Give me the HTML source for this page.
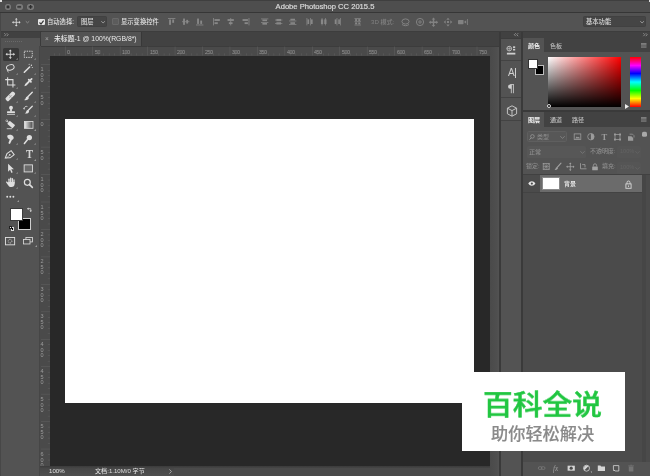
<!DOCTYPE html><html lang="zh"><head><meta charset="utf-8"><title>Adobe Photoshop CC 2015.5</title><style>
*{margin:0;padding:0;box-sizing:border-box}
html,body{width:650px;height:476px;overflow:hidden;background:#535353}
body{position:relative;font-family:"Liberation Sans","Noto Sans CJK SC",sans-serif;color:#ddd;font-size:7px;line-height:1;font-weight:500}
.a{position:absolute}
.t{position:absolute;white-space:nowrap;line-height:1;will-change:transform}
svg{position:absolute;overflow:visible;will-change:transform}
</style></head><body><div class="a" style="left:0px;top:0px;width:650px;height:12px;background:#4e4e4e;"></div><div class="a" style="left:0px;top:0px;width:650px;height:0.8px;background:#3f3f3f;"></div><div class="a" style="left:0px;top:0px;width:1.5px;height:1.5px;background:#ddd;"></div><div class="a" style="left:648.5px;top:0px;width:1.5px;height:1.5px;background:#ddd;"></div><div class="a" style="left:0px;top:12px;width:650px;height:1px;background:#363636;"></div><div class="a" style="left:4.6px;top:3.500px;width:6.800px;height:6.800px;border-radius:50%;background:radial-gradient(circle,#666 0,#7a7a7a 55%,#8e8e8e 100%)"></div><div class="a" style="left:15.8px;top:3.500px;width:6.800px;height:6.800px;border-radius:50%;background:radial-gradient(circle,#666 0,#7a7a7a 55%,#8e8e8e 100%)"></div><div class="a" style="left:27.2px;top:3.500px;width:6.800px;height:6.800px;border-radius:50%;background:radial-gradient(circle,#666 0,#7a7a7a 55%,#8e8e8e 100%)"></div><svg style="left:0;top:0" width="40" height="12"><g stroke="#2e2e2e" stroke-width="1.300" fill="none"><path d="M6.800 5.700l2.400 2.400M9.200 5.700l-2.400 2.400"/><path d="M17.300 6.900h3.800"/><path d="M28.700 6.900h3.800M30.600 5v3.800"/></g></svg><div class="t" style="left:0px;top:2.7px;font-size:7.6px;color:#dadada;width:650px;text-align:center;-webkit-text-stroke:0.200px #dadada;">Adobe Photoshop CC 2015.5</div><div class="a" style="left:0px;top:13px;width:650px;height:17.7px;background:#535353;"></div><div class="a" style="left:0px;top:30.7px;width:650px;height:1.3px;background:#3d3d3d;"></div><svg style="left:11.7px;top:18.4px" width="8.6" height="8.6" viewBox="0 0 10 10"><g stroke="#d8d8d8" stroke-width="1" fill="none"><path d="M5 1v8M1 5h8"/></g><g fill="#d8d8d8"><path d="M5 0l1.6 1.8h-3.2zM5 10l1.6-1.8h-3.2zM0 5l1.8-1.6v3.2zM10 5l-1.8-1.6v3.2z"/></g></svg><svg style="left:25px;top:21.300px" width="5" height="2.400" viewBox="0 0 5 3"><path d="M0.300 0.300l2.200 2 2.200-2" stroke="#9a9a9a" fill="none" stroke-width="1"/></svg><div class="a" style="left:38px;top:18.5px;width:6.5px;height:6.5px;background:#e6e6e6;border-radius:1px"></div><svg style="left:38px;top:18.5px" width="7" height="7" viewBox="0 0 7 7"><path d="M1.5 3.5l1.5 1.6 2.6-3.4" stroke="#333" fill="none" stroke-width="1.1"/></svg><div class="t" style="left:47.2px;top:19px;font-size:6.3px;color:#e0e0e0;">自动选择:</div><div class="a" style="left:76.5px;top:16.3px;width:30.7px;height:10.6px;background:#454545;border-radius:1.500px;border:0.500px solid #414141"></div><div class="t" style="left:81px;top:19px;font-size:6.3px;color:#dcdcdc;">图层</div><svg style="left:100.500px;top:20.800px" width="4.200" height="2.500" viewBox="0 0 5 3"><path d="M0.300 0.300l2.200 2 2.200-2" stroke="#aaa" fill="none" stroke-width="1"/></svg><div class="a" style="left:112.200px;top:18.200px;width:6.800px;height:6.800px;background:#5c5c5c;border:0.600px solid #686868;border-radius:1px"></div><div class="t" style="left:121.4px;top:19px;font-size:6.3px;color:#e0e0e0;">显示变换控件</div><svg style="left:168.3px;top:17.6px" width="7.400" height="7.400" viewBox="0 0 8 8"><g fill="#888"><rect x="0" y="0" width="8" height="0.9"/><rect x="1.2" y="1.6" width="2" height="5.8"/><rect x="4.6" y="1.6" width="2" height="3.6"/></g></svg><svg style="left:182.1px;top:17.6px" width="7.400" height="7.400" viewBox="0 0 8 8"><g fill="#888"><rect x="0" y="3.6" width="8" height="0.9"/><rect x="1.2" y="0.6" width="2" height="6.8"/><rect x="4.6" y="2" width="2" height="4"/></g></svg><svg style="left:195.9px;top:17.6px" width="7.400" height="7.400" viewBox="0 0 8 8"><g fill="#888"><rect x="0" y="7.1" width="8" height="0.9"/><rect x="1.2" y="0.6" width="2" height="5.8"/><rect x="4.6" y="2.8" width="2" height="3.6"/></g></svg><svg style="left:212.5px;top:17.6px" width="7.400" height="7.400" viewBox="0 0 8 8"><g fill="#888"><rect x="0" y="0" width="0.9" height="8"/><rect x="1.6" y="1.2" width="5.8" height="2"/><rect x="1.6" y="4.6" width="3.6" height="2"/></g></svg><svg style="left:227.3px;top:17.6px" width="7.400" height="7.400" viewBox="0 0 8 8"><g fill="#888"><rect x="3.6" y="0" width="0.9" height="8"/><rect x="0.6" y="1.2" width="6.8" height="2"/><rect x="2" y="4.6" width="4" height="2"/></g></svg><svg style="left:241.5px;top:17.6px" width="7.400" height="7.400" viewBox="0 0 8 8"><g fill="#888"><rect x="7.1" y="0" width="0.9" height="8"/><rect x="0.6" y="1.2" width="5.8" height="2"/><rect x="2.8" y="4.6" width="3.6" height="2"/></g></svg><svg style="left:260.6px;top:17.6px" width="7.400" height="7.400" viewBox="0 0 8 8"><g fill="#888"><rect x="0" y="0.6" width="8" height="0.8"/><rect x="0" y="4.4" width="8" height="0.8"/><rect x="1.5" y="1.6" width="5" height="1.8"/><rect x="1.5" y="5.4" width="5" height="1.8"/></g></svg><svg style="left:274.8px;top:17.6px" width="7.400" height="7.400" viewBox="0 0 8 8"><g fill="#888"><rect x="0" y="1.8" width="8" height="0.8"/><rect x="0" y="5.4" width="8" height="0.8"/><rect x="1.5" y="1" width="5" height="2.4"/><rect x="1.5" y="4.6" width="5" height="2.4"/></g></svg><svg style="left:288.6px;top:17.6px" width="7.400" height="7.400" viewBox="0 0 8 8"><g fill="#888"><rect x="0" y="2.8" width="8" height="0.8"/><rect x="0" y="6.6" width="8" height="0.8"/><rect x="1.5" y="0.8" width="5" height="1.8"/><rect x="1.5" y="4.6" width="5" height="1.8"/></g></svg><svg style="left:305.8px;top:17.6px" width="7.400" height="7.400" viewBox="0 0 8 8"><g fill="#888"><rect x="0.6" y="0" width="0.8" height="8"/><rect x="4.4" y="0" width="0.8" height="8"/><rect x="1.6" y="1.5" width="1.8" height="5"/><rect x="5.4" y="1.5" width="1.8" height="5"/></g></svg><svg style="left:319.5px;top:17.6px" width="7.400" height="7.400" viewBox="0 0 8 8"><g fill="#888"><rect x="1.8" y="0" width="0.8" height="8"/><rect x="5.4" y="0" width="0.8" height="8"/><rect x="1" y="1.5" width="2.4" height="5"/><rect x="4.6" y="1.5" width="2.4" height="5"/></g></svg><svg style="left:334.1px;top:17.6px" width="7.400" height="7.400" viewBox="0 0 8 8"><g fill="#888"><rect x="2.8" y="0" width="0.8" height="8"/><rect x="6.6" y="0" width="0.8" height="8"/><rect x="0.8" y="1.5" width="1.8" height="5"/><rect x="4.6" y="1.5" width="1.8" height="5"/></g></svg><svg style="left:353.6px;top:17.6px" width="7.400" height="7.400" viewBox="0 0 8 8"><g fill="#888"><rect x="0.5" y="0" width="7" height="0.8"/><rect x="0.5" y="3.6" width="7" height="0.8"/><rect x="0.5" y="7.2" width="7" height="0.8"/><rect x="1.2" y="1.2" width="2.2" height="2"/><rect x="4.6" y="1.2" width="2.2" height="2"/><rect x="1.2" y="4.8" width="2.2" height="2"/><rect x="4.6" y="4.8" width="2.2" height="2"/></g></svg><div class="t" style="left:370.5px;top:19.2px;font-size:6.1px;color:#808080;">3D 模式:</div><svg style="left:400px;top:17px" width="70" height="10" viewBox="0 0 70 10"><g fill="none" stroke="#828282" stroke-width="1"><ellipse cx="5.5" cy="4.5" rx="3.6" ry="2.6"/><path d="M2 7.5c2 1.6 5 1.6 7 0"/><circle cx="20" cy="5" r="3.6"/><circle cx="20" cy="5" r="1.2"/></g><g fill="#828282"><path d="M33.5 0.5l1.8 2h-1.1v2h2v-1.1l2 1.8-2 1.8v-1.1h-2v2h1.1l-1.8 2-1.8-2h1.1v-2h-2v1.1l-2-1.8 2-1.8v1.1h2v-2h-1.1z"/><path d="M48 0.8l1.7 2h-3.4zM48 9.4l1.7-2h-3.4zM43.7 5l2-1.7v3.4zM52.3 5l-2-1.7v3.4z"/><rect x="47" y="4" width="2" height="2"/><rect x="58" y="3" width="5.5" height="4.2" rx="0.6"/><path d="M64 5l2.2-1.8v3.6z"/><rect x="67" y="2" width="0.8" height="6"/></g></svg><div class="a" style="left:582.6px;top:16.3px;width:63.6px;height:10.9px;background:#454545;border-radius:1.500px;border:0.500px solid #414141"></div><div class="t" style="left:585.5px;top:19px;font-size:6.3px;color:#dcdcdc;">基本功能</div><svg style="left:640.300px;top:20.800px" width="4.200" height="2.500" viewBox="0 0 5 3"><path d="M0.300 0.300l2.200 2 2.200-2" stroke="#aaa" fill="none" stroke-width="1"/></svg><div class="a" style="left:0px;top:32px;width:39px;height:444px;background:#535353;"></div><div class="a" style="left:0px;top:32px;width:39.5px;height:5.8px;background:#414141;"></div><svg style="left:3.5px;top:33px" width="5" height="3.4" viewBox="0 0 5 3.4"><path d="M0.3 0.2l1.5 1.5-1.5 1.5M2.7 0.2l1.500 1.500-1.500 1.500" fill="none" stroke="#a8a8a8" stroke-width="0.700"/></svg><div class="a" style="left:39.5px;top:31px;width:2px;height:15.3px;background:#3a3a3a;"></div><div class="a" style="left:38.8px;top:46px;width:0.9px;height:430px;background:#464646;"></div><div class="a" style="left:5px;top:40.500px;width:18px;height:1px;background:repeating-linear-gradient(90deg,#6a6a6a 0 1px,transparent 1px 2px)"></div><div class="a" style="left:0px;top:13px;width:0.8px;height:463px;background:#474747;"></div><div class="a" style="left:3px;top:48px;width:16px;height:12.5px;background:#383838;border-radius:1.5px"></div><svg style="left:5.1000000000000005px;top:48.7px" width="10.6" height="10.6" viewBox="0 0 12 12"><g stroke="#dedede" stroke-width="1" fill="none"><path d="M6 2v8M2 6h8"/></g><g fill="#dedede"><path d="M6 0.6l1.7 2h-3.4zM6 11.4l1.7-2h-3.4zM0.6 6l2-1.7v3.4zM11.4 6l-2-1.7v3.4z"/></g></svg><svg style="left:15.7px;top:58.3px" width="1.800" height="1.800" viewBox="0 0 2 2"><path d="M2 0v2h-2z" fill="#909090"/></svg><svg style="left:23.2px;top:48.7px" width="10.6" height="10.6" viewBox="0 0 12 12"><rect x="1.5" y="2.5" width="9" height="7" fill="none" stroke="#dedede" stroke-width="1" stroke-dasharray="1.6 1.1"/></svg><svg style="left:33.8px;top:58.3px" width="1.800" height="1.800" viewBox="0 0 2 2"><path d="M2 0v2h-2z" fill="#909090"/></svg><svg style="left:5.1000000000000005px;top:63.2px" width="10.6" height="10.6" viewBox="0 0 12 12"><ellipse cx="6" cy="5" rx="4.4" ry="3" fill="none" stroke="#dedede" stroke-width="1.1" transform="rotate(-15 6 5)"/><path d="M3.2 7.2c-0.8 1.2-0.4 2.6 0.8 3.2" fill="none" stroke="#dedede" stroke-width="1"/></svg><svg style="left:15.7px;top:72.8px" width="1.800" height="1.800" viewBox="0 0 2 2"><path d="M2 0v2h-2z" fill="#909090"/></svg><svg style="left:23.2px;top:63.2px" width="10.6" height="10.6" viewBox="0 0 12 12"><path d="M1.5 10.5l6-6" stroke="#dedede" stroke-width="1.8" stroke-linecap="round"/><g fill="#dedede"><circle cx="9.5" cy="2.5" r="0.8"/><circle cx="7" cy="1.5" r="0.6"/><circle cx="10.5" cy="5" r="0.6"/></g></svg><svg style="left:33.8px;top:72.8px" width="1.800" height="1.800" viewBox="0 0 2 2"><path d="M2 0v2h-2z" fill="#909090"/></svg><svg style="left:5.1000000000000005px;top:77.2px" width="10.6" height="10.6" viewBox="0 0 12 12"><g fill="none" stroke="#dedede" stroke-width="1.2"><path d="M3 0.200v8.800h8.800"/><path d="M0.200 3h8.800v8.800"/></g></svg><svg style="left:15.7px;top:86.8px" width="1.800" height="1.800" viewBox="0 0 2 2"><path d="M2 0v2h-2z" fill="#909090"/></svg><svg style="left:23.2px;top:77.2px" width="10.6" height="10.6" viewBox="0 0 12 12"><path d="M1.5 10.5l1-2.5 4-4 1.5 1.5-4 4z" fill="#dedede"/><path d="M6.5 3l2.5 2.5M7.6 4.4l2.2-2.2" stroke="#dedede" stroke-width="2" stroke-linecap="round"/></svg><svg style="left:33.8px;top:86.8px" width="1.800" height="1.800" viewBox="0 0 2 2"><path d="M2 0v2h-2z" fill="#909090"/></svg><svg style="left:5.1000000000000005px;top:91.3px" width="10.6" height="10.6" viewBox="0 0 12 12"><rect x="-0.300" y="3.600" width="12.600" height="4.800" rx="1.700" fill="#dedede" transform="rotate(-45 6 6)"/><g fill="#535353"><circle cx="6" cy="6" r="0.5"/><circle cx="5" cy="5" r="0.4"/><circle cx="7" cy="7" r="0.4"/><circle cx="7" cy="5" r="0.4"/><circle cx="5" cy="7" r="0.4"/></g></svg><svg style="left:15.7px;top:100.89999999999999px" width="1.800" height="1.800" viewBox="0 0 2 2"><path d="M2 0v2h-2z" fill="#909090"/></svg><svg style="left:23.2px;top:91.3px" width="10.6" height="10.6" viewBox="0 0 12 12"><path d="M10.5 1.5l-5 5" stroke="#dedede" stroke-width="1.6" stroke-linecap="round"/><path d="M5.2 6.2c-1.8 0-2 1.6-2.4 2.6-0.3 0.8-1 1.2-1.6 1.4 2.6 0.8 5.4-0.4 5.4-2.6z" fill="#dedede"/></svg><svg style="left:33.8px;top:100.89999999999999px" width="1.800" height="1.800" viewBox="0 0 2 2"><path d="M2 0v2h-2z" fill="#909090"/></svg><svg style="left:5.1000000000000005px;top:105.2px" width="10.6" height="10.6" viewBox="0 0 12 12"><g fill="#dedede" transform="translate(0.800 0)"><circle cx="6" cy="3" r="2.200"/><rect x="5" y="4" width="2" height="3.500"/><rect x="1.500" y="7" width="9" height="2.200" rx="0.600"/><rect x="1.500" y="10" width="9" height="1"/></g></svg><svg style="left:15.7px;top:114.8px" width="1.800" height="1.800" viewBox="0 0 2 2"><path d="M2 0v2h-2z" fill="#909090"/></svg><svg style="left:23.2px;top:105.2px" width="10.6" height="10.6" viewBox="0 0 12 12"><path d="M10.5 1.5l-4.5 4.5" stroke="#dedede" stroke-width="1.5" stroke-linecap="round"/><path d="M5.6 5.8c-1.6 0-1.8 1.4-2.2 2.4-0.3 0.8-0.9 1.1-1.5 1.3 2.4 0.8 5-0.4 5-2.4z" fill="#dedede"/><path d="M1 4.5a3 3 0 0 1 4-2.8" fill="none" stroke="#dedede" stroke-width="0.9"/><path d="M0.2 3.6l1 1.8 1.3-1.4z" fill="#dedede"/></svg><svg style="left:33.8px;top:114.8px" width="1.800" height="1.800" viewBox="0 0 2 2"><path d="M2 0v2h-2z" fill="#909090"/></svg><svg style="left:5.1000000000000005px;top:119.3px" width="10.6" height="10.6" viewBox="0 0 12 12"><path d="M0.5 2l3 1.5M2 0.5l1.5 3" stroke="#dedede" stroke-width="0.9"/><rect x="3" y="4" width="8" height="4.6" rx="0.8" fill="#dedede" transform="rotate(40 7 6.3)"/><path d="M2 11h6" stroke="#dedede" stroke-width="0.9"/></svg><svg style="left:15.7px;top:128.9px" width="1.800" height="1.800" viewBox="0 0 2 2"><path d="M2 0v2h-2z" fill="#909090"/></svg><svg style="left:23.9px;top:120.9px" width="9.400" height="7.800" viewBox="0 0 11 9"><defs><linearGradient id="gg" x1="0" x2="1" y1="0" y2="0"><stop offset="0" stop-color="#eee"/><stop offset="1" stop-color="#444"/></linearGradient></defs><rect x="0.5" y="0.5" width="10" height="8" fill="url(#gg)" stroke="#dedede" stroke-width="1"/></svg><svg style="left:34.0px;top:129.1px" width="2" height="2" viewBox="0 0 2 2"><path d="M2 0v2h-2z" fill="#9a9a9a"/></svg><svg style="left:5.1000000000000005px;top:133.7px" width="10.6" height="10.6" viewBox="0 0 12 12"><path d="M3 1.5c2-1.2 5.5-0.6 6.6 1.6 0.8 1.6-0.2 3.2-1.8 3.6l-2.2 4.6-1.8-0.8 1.6-4.4c-2-0.6-3.6-3-2.4-4.6z" fill="#dedede"/></svg><svg style="left:15.7px;top:143.3px" width="1.800" height="1.800" viewBox="0 0 2 2"><path d="M2 0v2h-2z" fill="#909090"/></svg><svg style="left:23.2px;top:133.7px" width="10.6" height="10.6" viewBox="0 0 12 12"><circle cx="7.2" cy="4" r="3" fill="#dedede"/><path d="M5.2 6.2l-3.6 4.6" stroke="#dedede" stroke-width="1.7" stroke-linecap="round"/></svg><svg style="left:33.8px;top:143.3px" width="1.800" height="1.800" viewBox="0 0 2 2"><path d="M2 0v2h-2z" fill="#909090"/></svg><svg style="left:5.1000000000000005px;top:148.7px" width="10.6" height="10.6" viewBox="0 0 12 12"><path d="M1 11l1.2-5.2 4.2-4 4 4-4 4.2z" fill="none" stroke="#dedede" stroke-width="1.2" transform="rotate(8 6 6)"/><circle cx="5.4" cy="6.6" r="1" fill="#dedede"/><path d="M1.2 10.8l3.6-3.6" stroke="#dedede" stroke-width="0.8"/></svg><svg style="left:15.7px;top:158.3px" width="1.800" height="1.800" viewBox="0 0 2 2"><path d="M2 0v2h-2z" fill="#909090"/></svg><div class="t" style="left:25.9px;top:147.8px;font-family:'Liberation Serif',serif;font-weight:bold;font-size:12px;color:#dedede;transform-origin:0 0;transform:scaleX(0.860)">T</div><svg style="left:34.0px;top:158.5px" width="2" height="2" viewBox="0 0 2 2"><path d="M2 0v2h-2z" fill="#9a9a9a"/></svg><svg style="left:5.1000000000000005px;top:162.7px" width="10.6" height="10.6" viewBox="0 0 12 12"><path d="M3.5 0.8v9l2.2-2.2 1.6 3.6 1.4-0.6-1.6-3.6h3z" fill="#dedede"/></svg><svg style="left:15.7px;top:172.3px" width="1.800" height="1.800" viewBox="0 0 2 2"><path d="M2 0v2h-2z" fill="#909090"/></svg><svg style="left:23.2px;top:162.7px" width="10.6" height="10.6" viewBox="0 0 12 12"><rect x="1.300" y="2.100" width="9.400" height="8" fill="#6a6a6a" stroke="#dedede" stroke-width="1"/></svg><svg style="left:33.8px;top:172.3px" width="1.800" height="1.800" viewBox="0 0 2 2"><path d="M2 0v2h-2z" fill="#909090"/></svg><svg style="left:5.1000000000000005px;top:177.0px" width="10.6" height="10.6" viewBox="0 0 12 12"><g fill="#dedede" transform="translate(0.900 0)"><rect x="2.900" y="1.800" width="1.500" height="5.500" rx="0.750"/><rect x="4.800" y="0.700" width="1.500" height="6" rx="0.750"/><rect x="6.700" y="1.200" width="1.500" height="6" rx="0.750"/><rect x="8.600" y="2.600" width="1.400" height="5" rx="0.700"/><path d="M2.900 5.800h7.100v2.200c0 2-1.400 3.400-3.400 3.400h-0.600c-1.400 0-2.300-0.600-3.100-1.800l-2.500-3.400c-0.500-0.800 0.500-1.500 1.200-0.900l1.300 1.300z"/></g></svg><svg style="left:15.7px;top:186.60000000000002px" width="1.800" height="1.800" viewBox="0 0 2 2"><path d="M2 0v2h-2z" fill="#909090"/></svg><svg style="left:23.3px;top:177.5px" width="10.400" height="10.400" viewBox="0 0 12 12"><circle cx="5" cy="5" r="3.400" fill="none" stroke="#dedede" stroke-width="1.400"/><path d="M7.600 7.600l3.200 3.200" stroke="#dedede" stroke-width="1.800" stroke-linecap="round"/></svg><svg style="left:6.400px;top:194.800px" width="8.600" height="3.440" viewBox="0 0 10 4"><g fill="#dedede"><circle cx="1.4" cy="2" r="1.1"/><circle cx="5" cy="2" r="1.1"/><circle cx="8.600" cy="2" r="1.100"/></g></svg><svg style="left:16.5px;top:200px" width="2" height="2" viewBox="0 0 2 2"><path d="M2 0v2h-2z" fill="#9a9a9a"/></svg><div class="a" style="left:18px;top:217.5px;width:13.3px;height:12.3px;background:#000;border:0.800px solid #cfcfcf"></div><div class="a" style="left:10px;top:207.6px;width:13.4px;height:13.4px;background:#fff;border:0.600px solid #3a3a3a"></div><svg style="left:26.800px;top:207.300px" width="5" height="5" viewBox="0 0 6 6"><path d="M1 2h3.500v3.200" fill="none" stroke="#dedede" stroke-width="0.9"/><path d="M0 2l1.800-1.500v3zM4.500 6l-1.500-1.800h3z" fill="#dedede"/></svg><div class="a" style="left:10.6px;top:227.4px;width:3.5px;height:3.5px;background:#000;border:0.500px solid #ddd"></div><div class="a" style="left:8.9px;top:225.6px;width:3.5px;height:3.5px;background:#fff;border:0.500px solid #222"></div><svg style="left:5px;top:237.200px" width="10.100" height="8.300" viewBox="0 0 11 9"><rect x="0.500" y="0.500" width="10" height="8" fill="none" stroke="#dedede" stroke-width="1"/><circle cx="5.500" cy="4.500" r="2" fill="none" stroke="#dedede" stroke-width="0.900" stroke-dasharray="1 0.800"/></svg><svg style="left:23.200px;top:237.200px" width="9.900" height="8.200" viewBox="0 0 12 10"><rect x="3.500" y="0.500" width="8" height="5.500" fill="none" stroke="#dedede" stroke-width="1"/><rect x="0.500" y="3" width="8" height="5.500" fill="#535353" stroke="#dedede" stroke-width="1"/></svg><svg style="left:34.500px;top:245px" width="2" height="2" viewBox="0 0 2 2"><path d="M2 0v2h-2z" fill="#9a9a9a"/></svg><div class="a" style="left:41px;top:32px;width:460px;height:14.5px;background:#424242;"></div><div class="a" style="left:41px;top:32px;width:100px;height:14.5px;background:#535353;"></div><div class="a" style="left:141px;top:32px;width:1px;height:14.5px;background:#383838;"></div><div class="t" style="left:44.5px;top:36px;font-size:6.5px;color:#a8a8a8;">×</div><div class="t" style="left:54px;top:36.4px;font-size:6.85px;color:#eaeaea;">未标题-1 @ 100%(RGB/8*)</div><div class="a" style="left:39.6px;top:46.3px;width:451.4px;height:9.4px;background:#4a4a4a;"></div><div class="a" style="left:39.6px;top:46.3px;width:10.4px;height:420px;background:#4a4a4a;"></div><div class="a" style="left:41px;top:46px;width:460px;height:0.6px;background:#3c3c3c;"></div><div class="a" style="left:50px;top:55.7px;width:440.1px;height:410.3px;background:#282828;"></div><div class="a" style="left:490px;top:46.5px;width:9.5px;height:430px;background:linear-gradient(90deg,#4a4a4a,#4f4f4f 70%,#555 100%);"></div><div class="a" style="left:499.3px;top:32px;width:1.5px;height:444px;background:#3a3a3a;"></div><svg style="left:0;top:0" width="650" height="476"><g fill="#606060"><rect x="54.02" y="53.30" width="0.500" height="2.2"/><rect x="59.51" y="53.30" width="0.500" height="2.2"/><rect x="65.00" y="46.50" width="0.500" height="9"/><rect x="70.49" y="53.30" width="0.500" height="2.2"/><rect x="75.98" y="53.30" width="0.500" height="2.2"/><rect x="81.47" y="53.30" width="0.500" height="2.2"/><rect x="86.96" y="53.30" width="0.500" height="2.2"/><rect x="92.45" y="46.50" width="0.500" height="9"/><rect x="97.94" y="53.30" width="0.500" height="2.2"/><rect x="103.43" y="53.30" width="0.500" height="2.2"/><rect x="108.92" y="53.30" width="0.500" height="2.2"/><rect x="114.41" y="53.30" width="0.500" height="2.2"/><rect x="119.90" y="46.50" width="0.500" height="9"/><rect x="125.39" y="53.30" width="0.500" height="2.2"/><rect x="130.88" y="53.30" width="0.500" height="2.2"/><rect x="136.37" y="53.30" width="0.500" height="2.2"/><rect x="141.86" y="53.30" width="0.500" height="2.2"/><rect x="147.35" y="46.50" width="0.500" height="9"/><rect x="152.84" y="53.30" width="0.500" height="2.2"/><rect x="158.33" y="53.30" width="0.500" height="2.2"/><rect x="163.82" y="53.30" width="0.500" height="2.2"/><rect x="169.31" y="53.30" width="0.500" height="2.2"/><rect x="174.80" y="46.50" width="0.500" height="9"/><rect x="180.29" y="53.30" width="0.500" height="2.2"/><rect x="185.78" y="53.30" width="0.500" height="2.2"/><rect x="191.27" y="53.30" width="0.500" height="2.2"/><rect x="196.76" y="53.30" width="0.500" height="2.2"/><rect x="202.25" y="46.50" width="0.500" height="9"/><rect x="207.74" y="53.30" width="0.500" height="2.2"/><rect x="213.23" y="53.30" width="0.500" height="2.2"/><rect x="218.72" y="53.30" width="0.500" height="2.2"/><rect x="224.21" y="53.30" width="0.500" height="2.2"/><rect x="229.70" y="46.50" width="0.500" height="9"/><rect x="235.19" y="53.30" width="0.500" height="2.2"/><rect x="240.68" y="53.30" width="0.500" height="2.2"/><rect x="246.17" y="53.30" width="0.500" height="2.2"/><rect x="251.66" y="53.30" width="0.500" height="2.2"/><rect x="257.15" y="46.50" width="0.500" height="9"/><rect x="262.64" y="53.30" width="0.500" height="2.2"/><rect x="268.13" y="53.30" width="0.500" height="2.2"/><rect x="273.62" y="53.30" width="0.500" height="2.2"/><rect x="279.11" y="53.30" width="0.500" height="2.2"/><rect x="284.60" y="46.50" width="0.500" height="9"/><rect x="290.09" y="53.30" width="0.500" height="2.2"/><rect x="295.58" y="53.30" width="0.500" height="2.2"/><rect x="301.07" y="53.30" width="0.500" height="2.2"/><rect x="306.56" y="53.30" width="0.500" height="2.2"/><rect x="312.05" y="46.50" width="0.500" height="9"/><rect x="317.54" y="53.30" width="0.500" height="2.2"/><rect x="323.03" y="53.30" width="0.500" height="2.2"/><rect x="328.52" y="53.30" width="0.500" height="2.2"/><rect x="334.01" y="53.30" width="0.500" height="2.2"/><rect x="339.50" y="46.50" width="0.500" height="9"/><rect x="344.99" y="53.30" width="0.500" height="2.2"/><rect x="350.48" y="53.30" width="0.500" height="2.2"/><rect x="355.97" y="53.30" width="0.500" height="2.2"/><rect x="361.46" y="53.30" width="0.500" height="2.2"/><rect x="366.95" y="46.50" width="0.500" height="9"/><rect x="372.44" y="53.30" width="0.500" height="2.2"/><rect x="377.93" y="53.30" width="0.500" height="2.2"/><rect x="383.42" y="53.30" width="0.500" height="2.2"/><rect x="388.91" y="53.30" width="0.500" height="2.2"/><rect x="394.40" y="46.50" width="0.500" height="9"/><rect x="399.89" y="53.30" width="0.500" height="2.2"/><rect x="405.38" y="53.30" width="0.500" height="2.2"/><rect x="410.87" y="53.30" width="0.500" height="2.2"/><rect x="416.36" y="53.30" width="0.500" height="2.2"/><rect x="421.85" y="46.50" width="0.500" height="9"/><rect x="427.34" y="53.30" width="0.500" height="2.2"/><rect x="432.83" y="53.30" width="0.500" height="2.2"/><rect x="438.32" y="53.30" width="0.500" height="2.2"/><rect x="443.81" y="53.30" width="0.500" height="2.2"/><rect x="449.30" y="46.50" width="0.500" height="9"/><rect x="454.79" y="53.30" width="0.500" height="2.2"/><rect x="460.28" y="53.30" width="0.500" height="2.2"/><rect x="465.77" y="53.30" width="0.500" height="2.2"/><rect x="471.26" y="53.30" width="0.500" height="2.2"/><rect x="476.75" y="46.50" width="0.500" height="9"/><rect x="482.24" y="53.30" width="0.500" height="2.2"/><rect x="487.73" y="53.30" width="0.500" height="2.2"/></g></svg><div class="t" style="left:67.3px;top:50.2px;font-size:5.5px;color:#9c9c9c;transform-origin:0 0;transform:scaleX(0.88);font-weight:400">0</div><div class="t" style="left:94.8px;top:50.2px;font-size:5.5px;color:#9c9c9c;transform-origin:0 0;transform:scaleX(0.88);font-weight:400">50</div><div class="t" style="left:122.2px;top:50.2px;font-size:5.5px;color:#9c9c9c;transform-origin:0 0;transform:scaleX(0.88);font-weight:400">100</div><div class="t" style="left:149.7px;top:50.2px;font-size:5.5px;color:#9c9c9c;transform-origin:0 0;transform:scaleX(0.88);font-weight:400">150</div><div class="t" style="left:177.1px;top:50.2px;font-size:5.5px;color:#9c9c9c;transform-origin:0 0;transform:scaleX(0.88);font-weight:400">200</div><div class="t" style="left:204.6px;top:50.2px;font-size:5.5px;color:#9c9c9c;transform-origin:0 0;transform:scaleX(0.88);font-weight:400">250</div><div class="t" style="left:232.0px;top:50.2px;font-size:5.5px;color:#9c9c9c;transform-origin:0 0;transform:scaleX(0.88);font-weight:400">300</div><div class="t" style="left:259.4px;top:50.2px;font-size:5.5px;color:#9c9c9c;transform-origin:0 0;transform:scaleX(0.88);font-weight:400">350</div><div class="t" style="left:286.9px;top:50.2px;font-size:5.5px;color:#9c9c9c;transform-origin:0 0;transform:scaleX(0.88);font-weight:400">400</div><div class="t" style="left:314.4px;top:50.2px;font-size:5.5px;color:#9c9c9c;transform-origin:0 0;transform:scaleX(0.88);font-weight:400">450</div><div class="t" style="left:341.8px;top:50.2px;font-size:5.5px;color:#9c9c9c;transform-origin:0 0;transform:scaleX(0.88);font-weight:400">500</div><div class="t" style="left:369.3px;top:50.2px;font-size:5.5px;color:#9c9c9c;transform-origin:0 0;transform:scaleX(0.88);font-weight:400">550</div><div class="t" style="left:396.7px;top:50.2px;font-size:5.5px;color:#9c9c9c;transform-origin:0 0;transform:scaleX(0.88);font-weight:400">600</div><div class="t" style="left:424.2px;top:50.2px;font-size:5.5px;color:#9c9c9c;transform-origin:0 0;transform:scaleX(0.88);font-weight:400">650</div><div class="t" style="left:451.6px;top:50.2px;font-size:5.5px;color:#9c9c9c;transform-origin:0 0;transform:scaleX(0.88);font-weight:400">700</div><div class="t" style="left:479.1px;top:50.2px;font-size:5.5px;color:#9c9c9c;transform-origin:0 0;transform:scaleX(0.88);font-weight:400">750</div><svg style="left:0;top:0" width="650" height="476"><g fill="#606060"><rect x="47.80" y="59.01" width="2.2" height="0.500"/><rect x="41.00" y="64.50" width="9" height="0.500"/><rect x="47.80" y="69.99" width="2.2" height="0.500"/><rect x="47.80" y="75.48" width="2.2" height="0.500"/><rect x="47.80" y="80.97" width="2.2" height="0.500"/><rect x="47.80" y="86.46" width="2.2" height="0.500"/><rect x="41.00" y="91.95" width="9" height="0.500"/><rect x="47.80" y="97.44" width="2.2" height="0.500"/><rect x="47.80" y="102.93" width="2.2" height="0.500"/><rect x="47.80" y="108.42" width="2.2" height="0.500"/><rect x="47.80" y="113.91" width="2.2" height="0.500"/><rect x="41.00" y="119.40" width="9" height="0.500"/><rect x="47.80" y="124.89" width="2.2" height="0.500"/><rect x="47.80" y="130.38" width="2.2" height="0.500"/><rect x="47.80" y="135.87" width="2.2" height="0.500"/><rect x="47.80" y="141.36" width="2.2" height="0.500"/><rect x="41.00" y="146.85" width="9" height="0.500"/><rect x="47.80" y="152.34" width="2.2" height="0.500"/><rect x="47.80" y="157.83" width="2.2" height="0.500"/><rect x="47.80" y="163.32" width="2.2" height="0.500"/><rect x="47.80" y="168.81" width="2.2" height="0.500"/><rect x="41.00" y="174.30" width="9" height="0.500"/><rect x="47.80" y="179.79" width="2.2" height="0.500"/><rect x="47.80" y="185.28" width="2.2" height="0.500"/><rect x="47.80" y="190.77" width="2.2" height="0.500"/><rect x="47.80" y="196.26" width="2.2" height="0.500"/><rect x="41.00" y="201.75" width="9" height="0.500"/><rect x="47.80" y="207.24" width="2.2" height="0.500"/><rect x="47.80" y="212.73" width="2.2" height="0.500"/><rect x="47.80" y="218.22" width="2.2" height="0.500"/><rect x="47.80" y="223.71" width="2.2" height="0.500"/><rect x="41.00" y="229.20" width="9" height="0.500"/><rect x="47.80" y="234.69" width="2.2" height="0.500"/><rect x="47.80" y="240.18" width="2.2" height="0.500"/><rect x="47.80" y="245.67" width="2.2" height="0.500"/><rect x="47.80" y="251.16" width="2.2" height="0.500"/><rect x="41.00" y="256.65" width="9" height="0.500"/><rect x="47.80" y="262.14" width="2.2" height="0.500"/><rect x="47.80" y="267.63" width="2.2" height="0.500"/><rect x="47.80" y="273.12" width="2.2" height="0.500"/><rect x="47.80" y="278.61" width="2.2" height="0.500"/><rect x="41.00" y="284.10" width="9" height="0.500"/><rect x="47.80" y="289.59" width="2.2" height="0.500"/><rect x="47.80" y="295.08" width="2.2" height="0.500"/><rect x="47.80" y="300.57" width="2.2" height="0.500"/><rect x="47.80" y="306.06" width="2.2" height="0.500"/><rect x="41.00" y="311.55" width="9" height="0.500"/><rect x="47.80" y="317.04" width="2.2" height="0.500"/><rect x="47.80" y="322.53" width="2.2" height="0.500"/><rect x="47.80" y="328.02" width="2.2" height="0.500"/><rect x="47.80" y="333.51" width="2.2" height="0.500"/><rect x="41.00" y="339.00" width="9" height="0.500"/><rect x="47.80" y="344.49" width="2.2" height="0.500"/><rect x="47.80" y="349.98" width="2.2" height="0.500"/><rect x="47.80" y="355.47" width="2.2" height="0.500"/><rect x="47.80" y="360.96" width="2.2" height="0.500"/><rect x="41.00" y="366.45" width="9" height="0.500"/><rect x="47.80" y="371.94" width="2.2" height="0.500"/><rect x="47.80" y="377.43" width="2.2" height="0.500"/><rect x="47.80" y="382.92" width="2.2" height="0.500"/><rect x="47.80" y="388.41" width="2.2" height="0.500"/><rect x="41.00" y="393.90" width="9" height="0.500"/><rect x="47.80" y="399.39" width="2.2" height="0.500"/><rect x="47.80" y="404.88" width="2.2" height="0.500"/><rect x="47.80" y="410.37" width="2.2" height="0.500"/><rect x="47.80" y="415.86" width="2.2" height="0.500"/><rect x="41.00" y="421.35" width="9" height="0.500"/><rect x="47.80" y="426.84" width="2.2" height="0.500"/><rect x="47.80" y="432.33" width="2.2" height="0.500"/><rect x="47.80" y="437.82" width="2.2" height="0.500"/><rect x="47.80" y="443.31" width="2.2" height="0.500"/><rect x="41.00" y="448.80" width="9" height="0.500"/><rect x="47.80" y="454.29" width="2.2" height="0.500"/><rect x="47.80" y="459.78" width="2.2" height="0.500"/></g></svg><div class="t" style="left:40.200px;top:66.3px;font-size:5.500px;font-weight:400;color:#9c9c9c;writing-mode:vertical-rl;text-orientation:upright;letter-spacing:-0.500px;line-height:4px;width:4px">100</div><div class="t" style="left:40.200px;top:93.8px;font-size:5.500px;font-weight:400;color:#9c9c9c;writing-mode:vertical-rl;text-orientation:upright;letter-spacing:-0.500px;line-height:4px;width:4px">50</div><div class="t" style="left:40.200px;top:121.2px;font-size:5.500px;font-weight:400;color:#9c9c9c;writing-mode:vertical-rl;text-orientation:upright;letter-spacing:-0.500px;line-height:4px;width:4px">0</div><div class="t" style="left:40.200px;top:148.7px;font-size:5.500px;font-weight:400;color:#9c9c9c;writing-mode:vertical-rl;text-orientation:upright;letter-spacing:-0.500px;line-height:4px;width:4px">50</div><div class="t" style="left:40.200px;top:176.1px;font-size:5.500px;font-weight:400;color:#9c9c9c;writing-mode:vertical-rl;text-orientation:upright;letter-spacing:-0.500px;line-height:4px;width:4px">100</div><div class="t" style="left:40.200px;top:203.6px;font-size:5.500px;font-weight:400;color:#9c9c9c;writing-mode:vertical-rl;text-orientation:upright;letter-spacing:-0.500px;line-height:4px;width:4px">150</div><div class="t" style="left:40.200px;top:231.0px;font-size:5.500px;font-weight:400;color:#9c9c9c;writing-mode:vertical-rl;text-orientation:upright;letter-spacing:-0.500px;line-height:4px;width:4px">200</div><div class="t" style="left:40.200px;top:258.4px;font-size:5.500px;font-weight:400;color:#9c9c9c;writing-mode:vertical-rl;text-orientation:upright;letter-spacing:-0.500px;line-height:4px;width:4px">250</div><div class="t" style="left:40.200px;top:285.9px;font-size:5.500px;font-weight:400;color:#9c9c9c;writing-mode:vertical-rl;text-orientation:upright;letter-spacing:-0.500px;line-height:4px;width:4px">300</div><div class="t" style="left:40.200px;top:313.4px;font-size:5.500px;font-weight:400;color:#9c9c9c;writing-mode:vertical-rl;text-orientation:upright;letter-spacing:-0.500px;line-height:4px;width:4px">350</div><div class="t" style="left:40.200px;top:340.8px;font-size:5.500px;font-weight:400;color:#9c9c9c;writing-mode:vertical-rl;text-orientation:upright;letter-spacing:-0.500px;line-height:4px;width:4px">400</div><div class="t" style="left:40.200px;top:368.3px;font-size:5.500px;font-weight:400;color:#9c9c9c;writing-mode:vertical-rl;text-orientation:upright;letter-spacing:-0.500px;line-height:4px;width:4px">450</div><div class="t" style="left:40.200px;top:395.7px;font-size:5.500px;font-weight:400;color:#9c9c9c;writing-mode:vertical-rl;text-orientation:upright;letter-spacing:-0.500px;line-height:4px;width:4px">500</div><div class="t" style="left:40.200px;top:423.2px;font-size:5.500px;font-weight:400;color:#9c9c9c;writing-mode:vertical-rl;text-orientation:upright;letter-spacing:-0.500px;line-height:4px;width:4px">550</div><div class="t" style="left:40.200px;top:450.6px;font-size:5.500px;font-weight:400;color:#9c9c9c;writing-mode:vertical-rl;text-orientation:upright;letter-spacing:-0.500px;line-height:4px;width:4px">600</div><div class="a" style="left:39.6px;top:46.6px;width:10.4px;height:9.1px;background:#4a4a4a;"></div><div class="a" style="left:65px;top:119.4px;width:409.1px;height:283.8px;background:#fff;"></div><div class="a" style="left:39.6px;top:465.7px;width:450.5px;height:10.3px;background:linear-gradient(#3b3b3b 0,#474747 25%,#4f4f4f 100%);"></div><div class="a" style="left:174px;top:467.5px;width:316px;height:8.5px;background:#4a4a4a;"></div><div class="t" style="left:49.3px;top:468.3px;font-size:6.1px;color:#e0e0e0;">100%</div><div class="t" style="left:95px;top:468.2px;font-size:6.1px;color:#dedede;">文档:1.10M/0 字节</div><svg style="left:169px;top:468.800px" width="3" height="5" viewBox="0 0 3 5"><path d="M0.400 0.400l2 2.100-2 2.100" fill="none" stroke="#bdbdbd" stroke-width="0.800"/></svg><div class="a" style="left:500.8px;top:32px;width:20.4px;height:444px;background:#535353;"></div><div class="a" style="left:500.8px;top:32px;width:20.4px;height:5.8px;background:#414141;"></div><svg style="left:514px;top:33px" width="5" height="3.4" viewBox="0 0 5 3.4"><path d="M1.8 0.2l-1.500 1.500 1.500 1.500M4.200 0.200l-1.500 1.500 1.500 1.500" fill="none" stroke="#a8a8a8" stroke-width="0.700"/></svg><div class="a" style="left:500.8px;top:37.5px;width:20.4px;height:0.8px;background:#3c3c3c;"></div><div class="a" style="left:521.1px;top:32px;width:1.9px;height:444px;background:#3a3a3a;"></div><div class="a" style="left:500.8px;top:59.5px;width:20.4px;height:1px;background:#434343;"></div><div class="a" style="left:500.8px;top:97.2px;width:20.4px;height:1px;background:#434343;"></div><div class="a" style="left:500.8px;top:120.3px;width:20.4px;height:1px;background:#434343;"></div><svg style="left:506.300px;top:44.800px" width="10.800" height="10.800" viewBox="0 0 12 12"><circle cx="3.600" cy="4" r="2.600" fill="none" stroke="#cfcfcf" stroke-width="0.900"/><path d="M1 4h5.200M3.600 1.400v5.200" stroke="#cfcfcf" stroke-width="0.600"/><g fill="#cfcfcf"><rect x="7.800" y="1.500" width="2.400" height="1.800"/><rect x="7.800" y="4.300" width="2.400" height="1.800"/><rect x="1" y="8.600" width="9.400" height="2"/></g></svg><div class="t" style="left:507.600px;top:68px;font-size:10px;font-weight:400;color:#cfcfcf">A</div><div class="a" style="left:515.2px;top:68px;width:0.9px;height:10px;background:#cfcfcf;"></div><svg style="left:507.300px;top:83.800px" width="7.800" height="9.800" viewBox="0 0 9 11"><path d="M3.800 0.500h4.200M5 0.500v10M7.400 0.500v10" stroke="#cfcfcf" stroke-width="1" fill="none"/><path d="M5 0.500h-1.400a2.400 2.400 0 0 0 0 4.800h1.400z" fill="#cfcfcf"/></svg><svg style="left:505.500px;top:104.500px" width="12" height="12" viewBox="0 0 12 12"><g fill="none" stroke="#cfcfcf" stroke-width="0.900" stroke-linejoin="round"><path d="M6 0.800l4.600 2.400v5.600l-4.600 2.400-4.600-2.400v-5.600z"/><path d="M1.400 3.200l4.600 2.400 4.600-2.400M6 5.600v5.600"/></g></svg><div class="a" style="left:523px;top:32px;width:127px;height:444px;background:#535353;"></div><div class="a" style="left:523px;top:32px;width:127px;height:6.5px;background:#424242;"></div><svg style="left:642.500px;top:33px" width="5" height="3.4" viewBox="0 0 5 3.4"><path d="M0.300 0.200l1.500 1.500-1.500 1.500M2.700 0.200l1.500 1.500-1.500 1.500" fill="none" stroke="#a8a8a8" stroke-width="0.700"/></svg><div class="a" style="left:523px;top:38.3px;width:127px;height:14.2px;background:#424242;"></div><div class="a" style="left:523px;top:38.3px;width:21.2px;height:14.7px;background:#535353;"></div><div class="t" style="left:528.2px;top:42.7px;font-size:6.1px;color:#f0f0f0;font-weight:bold">颜色</div><div class="t" style="left:549.8px;top:42.7px;font-size:6.05px;color:#bdbdbd;">色板</div><svg style="left:640.500px;top:42.800px" width="5.500" height="4.600" viewBox="0 0 6 5"><g fill="#8a8a8a"><rect y="0" width="6" height="0.900"/><rect y="1.400" width="6" height="0.900"/><rect y="2.800" width="6" height="0.900"/><rect y="4.100" width="6" height="0.900"/></g></svg><div class="a" style="left:534.5px;top:65px;width:9.5px;height:9.5px;background:#000;border:0.800px solid #bdbdbd"></div><div class="a" style="left:527.5px;top:58.5px;width:10.5px;height:10.5px;background:#fff;border:0.600px solid #333"></div><div class="a" style="left:548px;top:57px;width:72.500px;height:49.500px;background:linear-gradient(to top,#000,rgba(0,0,0,0)),linear-gradient(to right,#fff,#f00)"></div><div class="a" style="left:546.500px;top:104px;width:4px;height:4px;border-radius:50%;border:0.800px solid #ddd"></div><div class="a" style="left:630px;top:57px;width:11px;height:50px;background:linear-gradient(to bottom,#f00 0%,#f0f 17%,#00f 33%,#0ff 50%,#0f0 67%,#ff0 83%,#f00 100%)"></div><svg style="left:625px;top:103.500px" width="4" height="5" viewBox="0 0 4 5"><path d="M0 0l4 2.500-4 2.500z" fill="#eee"/></svg><div class="a" style="left:523px;top:110px;width:127px;height:1.5px;background:#3a3a3a;"></div><div class="a" style="left:523px;top:111.5px;width:127px;height:15.5px;background:#424242;"></div><div class="a" style="left:523px;top:111.5px;width:21.2px;height:16px;background:#535353;"></div><div class="t" style="left:528.2px;top:116.8px;font-size:6.1px;color:#f0f0f0;font-weight:bold">图层</div><div class="t" style="left:549.5px;top:116.8px;font-size:6.05px;color:#bdbdbd;">通道</div><div class="t" style="left:571.5px;top:116.8px;font-size:6.05px;color:#bdbdbd;">路径</div><svg style="left:640.500px;top:116.800px" width="5.500" height="4.600" viewBox="0 0 6 5"><g fill="#8a8a8a"><rect y="0" width="6" height="0.900"/><rect y="1.400" width="6" height="0.900"/><rect y="2.800" width="6" height="0.900"/><rect y="4.100" width="6" height="0.900"/></g></svg><div class="a" style="left:527.3px;top:131.2px;width:40px;height:11.2px;background:#575757;border-radius:1.500px;border:0.500px solid #5f5f5f"></div><svg style="left:529px;top:133.700px" width="6" height="6" viewBox="0 0 7 7"><circle cx="4" cy="2.800" r="2.100" fill="none" stroke="#9a9a9a" stroke-width="0.900"/><path d="M2.600 4.400l-2 2.200" stroke="#9a9a9a" stroke-width="1"/></svg><div class="t" style="left:537px;top:134.2px;font-size:6px;color:#8a8a8a;">类型</div><svg style="left:560px;top:135.500px" width="5" height="3" viewBox="0 0 5 3"><path d="M0.300 0.300l2.200 2 2.200-2" stroke="#8a8a8a" fill="none" stroke-width="0.800"/></svg><svg style="left:0;top:0" width="650" height="476" viewBox="0 0 650 476"><rect x="574.200" y="133.900" width="6.600" height="5.600" fill="none" stroke="#9c9c9c" stroke-width="0.800"/><path d="M575.200 138.600l1.600-2.200 1.200 1.200 0.800-0.800 1.200 1.800z" fill="#9c9c9c"/><circle cx="590.900" cy="136.700" r="3.200" fill="none" stroke="#9c9c9c" stroke-width="0.800"/><path d="M590.900 133.500a3.200 3.200 0 0 1 0 6.400z" fill="#9c9c9c"/><text x="601.500" y="140" font-family="Liberation Serif,serif" font-weight="bold" font-size="8.600" fill="#9c9c9c">T</text><rect x="615" y="134.500" width="5" height="5" fill="none" stroke="#9c9c9c" stroke-width="0.800"/><g fill="#9c9c9c"><rect x="614" y="133.500" width="1.900" height="1.900"/><rect x="619.100" y="133.500" width="1.900" height="1.900"/><rect x="614" y="138.600" width="1.900" height="1.900"/><rect x="619.100" y="138.600" width="1.900" height="1.900"/></g><path d="M628 136.200h3.400l1.800 1.800v2.700h-5.200z" fill="#9c9c9c"/><path d="M629.600 134.200h3l1.400 1.400v2" fill="none" stroke="#9c9c9c" stroke-width="0.700"/><rect x="642" y="131.800" width="5" height="5" rx="1.600" fill="#a8a8a8"/></svg><div class="a" style="left:527px;top:145.8px;width:59px;height:12.2px;background:#575757;border-radius:1.500px"></div><div class="t" style="left:529px;top:149px;font-size:6.1px;color:#8c8c8c;">正常</div><svg style="left:579.500px;top:151px" width="5" height="3" viewBox="0 0 5 3"><path d="M0.300 0.300l2.200 2 2.200-2" stroke="#7c7c7c" fill="none" stroke-width="0.800"/></svg><div class="t" style="left:590.2px;top:149px;font-size:5.95px;color:#8c8c8c;">不透明度:</div><div class="a" style="left:617px;top:146px;width:24px;height:12px;background:#555;border-radius:1.500px"></div><div class="t" style="left:620px;top:149.2px;font-size:5.6px;color:#636363;">100%</div><svg style="left:634.500px;top:151px" width="5" height="3" viewBox="0 0 5 3"><path d="M0.300 0.300l2.200 2 2.200-2" stroke="#646464" fill="none" stroke-width="0.800"/></svg><div class="t" style="left:525.8px;top:164px;font-size:5.95px;color:#8c8c8c;">锁定:</div><svg style="left:0;top:0" width="650" height="476" viewBox="0 0 650 476"><rect x="543.200" y="163.600" width="6" height="6" fill="none" stroke="#a2a2a2" stroke-width="0.700"/><path d="M543.200 163.600l6 6M549.200 163.600l-6 6M546.200 163.600v6M543.200 166.600h6" stroke="#a2a2a2" stroke-width="0.550"/><path d="M561 163.200l-3.800 4.200" stroke="#a2a2a2" stroke-width="1.100" stroke-linecap="round"/><path d="M557 167.200c-1.200 0-1.300 1-1.500 1.700-0.200 0.500-0.600 0.800-1 0.900 1.700 0.600 3.400-0.300 3.400-1.700z" fill="#a2a2a2"/><g stroke="#a2a2a2" stroke-width="0.800"><path d="M570.300 163.400v6.600M567 166.700h6.600"/></g><path d="M570.300 162.500l1.200 1.500h-2.400zM570.300 170.900l1.200-1.500h-2.400zM566.100 166.700l1.500-1.200v2.400zM574.500 166.700l-1.500-1.200v2.400z" fill="#a2a2a2"/><path d="M580.500 163.200v5.600h6" fill="none" stroke="#a2a2a2" stroke-width="0.800"/><path d="M582.200 164.600h2.800v2.800" fill="none" stroke="#a2a2a2" stroke-width="0.800"/><rect x="592.200" y="166.400" width="5.600" height="3.800" rx="0.500" fill="#a2a2a2"/><path d="M593.400 166.400v-1a1.600 1.600 0 0 1 3.200 0v1" fill="none" stroke="#a2a2a2" stroke-width="0.800"/></svg><div class="t" style="left:602px;top:164px;font-size:5.95px;color:#8c8c8c;">填充:</div><div class="a" style="left:617px;top:161.5px;width:24px;height:12px;background:#555;border-radius:1.500px"></div><div class="t" style="left:620px;top:164.7px;font-size:5.6px;color:#636363;">100%</div><svg style="left:634.500px;top:166.500px" width="5" height="3" viewBox="0 0 5 3"><path d="M0.300 0.300l2.200 2 2.200-2" stroke="#646464" fill="none" stroke-width="0.800"/></svg><div class="a" style="left:523px;top:174.5px;width:127px;height:288px;background:#4b4b4b;"></div><div class="a" style="left:641.5px;top:175px;width:4px;height:287px;background:#464646;"></div><div class="a" style="left:523px;top:462px;width:127px;height:14px;background:#535353;"></div><div class="a" style="left:523px;top:173.8px;width:127px;height:1px;background:#414141;"></div><div class="a" style="left:540px;top:175px;width:101.5px;height:16.5px;background:#6b6b6b;"></div><div class="a" style="left:523px;top:191.7px;width:118.5px;height:0.7px;background:#434343;"></div><svg style="left:527.900px;top:181.300px" width="7.700" height="5.100" viewBox="0 0 9 6"><path d="M0.300 3c1.200-1.800 2.600-2.600 4.200-2.600s3 0.800 4.200 2.600c-1.200 1.800-2.600 2.600-4.200 2.600s-3-0.800-4.200-2.600z" fill="#e6e6e6"/><circle cx="4.500" cy="3" r="1.300" fill="#4a4a4a"/></svg><div class="a" style="left:541.5px;top:176.5px;width:18px;height:13px;background:#fff;border:0.600px solid #8a8a8a"></div><div class="t" style="left:564px;top:180.5px;font-size:6px;color:#f0f0f0;font-weight:500">背景</div><svg style="left:625px;top:179.500px" width="7" height="9" viewBox="0 0 7 9"><rect x="0.900" y="3.900" width="5.200" height="4.400" fill="none" stroke="#d8d8d8" stroke-width="0.900"/><path d="M2 3.900v-1.400a1.500 1.500 0 0 1 3 0v1.400" fill="none" stroke="#d8d8d8" stroke-width="0.900"/><rect x="3.100" y="5.400" width="0.800" height="1.600" fill="#d8d8d8"/></svg><svg style="left:0;top:0" width="650" height="476" viewBox="0 0 650 476"><g fill="none" stroke="#7a7a7a" stroke-width="0.800"><rect x="538.300" y="466.700" width="3.800" height="2.800" rx="1.400"/><rect x="541.200" y="466.700" width="3.800" height="2.800" rx="1.400"/></g><text x="553" y="471" font-family="Liberation Serif,serif" font-style="italic" font-size="7.200" fill="#a0a0a0">fx</text><rect x="567.600" y="465.700" width="7.200" height="5" fill="#d6d6d6"/><circle cx="571.200" cy="468.200" r="1.600" fill="#4a4a4a"/><circle cx="586.500" cy="468.200" r="3" fill="none" stroke="#d6d6d6" stroke-width="0.800"/><path d="M584.400 470.300a3 3 0 0 1 4.200-4.200z" fill="#d6d6d6"/><path d="M590.600 471.600l1.300 1.300v-1.300z" fill="#ccc"/><path d="M597.800 465.600h2.600l0.700 0.900h3.900v4.400h-7.200z" fill="#d6d6d6"/><path d="M613.400 465.600h5.400v5.400h-3.700l-1.700-1.700z" fill="none" stroke="#d6d6d6" stroke-width="0.800"/><path d="M613.400 469.300v1.700h1.700z" fill="#d6d6d6"/><g fill="#747474"><rect x="628.800" y="466.600" width="4.600" height="5" rx="0.500"/><rect x="628.200" y="465.500" width="5.800" height="0.800"/><rect x="630.200" y="464.800" width="1.800" height="0.700"/></g></svg><div class="a" style="left:462px;top:371.7px;width:163px;height:79.3px;background:#fff;"></div><div class="t" style="left:482.600px;top:387.800px;transform-origin:0 50%;transform:scale(1.008,0.93);font-weight:500;font-size:29.500px;line-height:34px;color:#21c641;-webkit-text-stroke:0.500px #21c641;letter-spacing:0px">百科全说</div><div class="t" style="left:490.500px;top:424.200px;font-size:17.200px;line-height:20px;color:#8a8a8a;-webkit-text-stroke:0.150px #8a8a8a">助你轻松解决</div></body></html>
